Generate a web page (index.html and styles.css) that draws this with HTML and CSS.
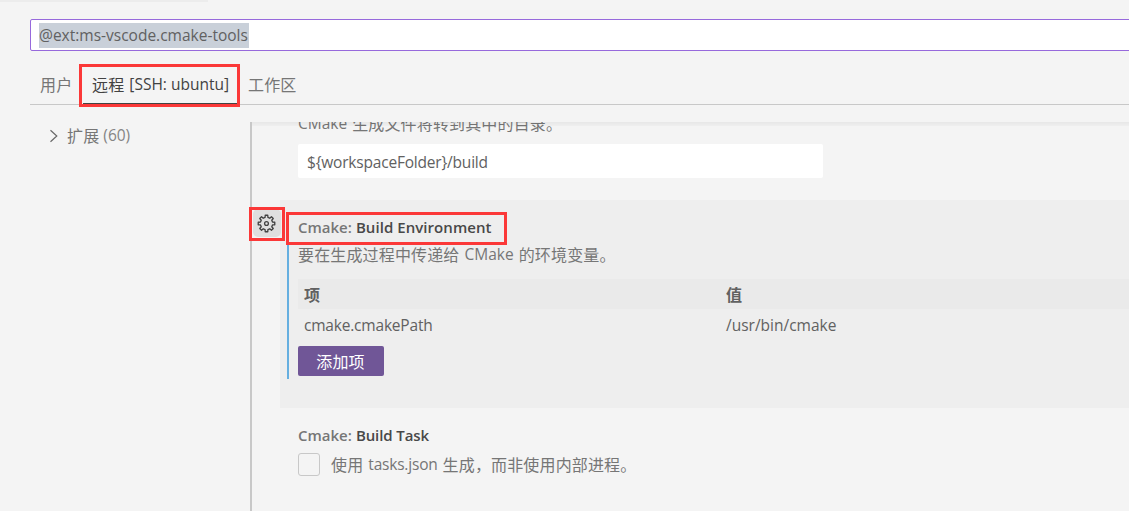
FILE: index.html
```html
<!DOCTYPE html>
<html lang="zh-CN">
<head>
<meta charset="utf-8">
<title>设置</title>
<link rel="stylesheet" href="styles.css">
</head>
<body>
<div class="editor-edge"></div>
<div class="search"><span class="selection"><span class="latin query">@ext:ms-vscode.cmake-tools</span></span></div>
<nav class="tabs">
  <div class="tab user">用户</div>
  <div class="tab active"><span>远程</span><span class="latin remote">[SSH: ubuntu]</span></div>
  <div class="tab workspace">工作区</div>
</nav>
<div class="main">
  <aside class="toc">
    <svg class="chevron" viewBox="0 0 10 14"><path d="M1.5 1.2 7.8 7 1.5 12.8"/></svg>
    <span>扩展</span><span class="latin count">(60)</span>
  </aside>
  <section class="settings">
    <div class="setting directory">
      <p class="description"><span class="latin cm">CMake</span><span>生成文件将转到其中的目录。</span></p>
      <div class="input"><span class="latin folder">${workspaceFolder}/build</span></div>
    </div>
    <div class="setting focused">
      <h3 class="title latin"><span class="category">Cmake:</span><span class="name env">Build Environment</span></h3>
      <p class="description"><span>要在生成过程中传递给</span><span class="latin cm">CMake</span><span>的环境变量。</span></p>
      <div class="table">
        <div class="row head"><span>项</span><span>值</span></div>
        <div class="row"><span class="latin key">cmake.cmakePath</span><span class="latin value">/usr/bin/cmake</span></div>
      </div>
      <button class="add">添加项</button>
      <div class="modified"></div>
      <div class="gear"><svg viewBox="0 0 20 20"><path d="M8.50 3.67 L8.67 1.30 L11.33 1.30 L11.50 3.67 L13.42 4.46 L15.21 2.90 L17.10 4.79 L15.54 6.58 L16.33 8.50 L18.70 8.67 L18.70 11.33 L16.33 11.50 L15.54 13.42 L17.10 15.21 L15.21 17.10 L13.42 15.54 L11.50 16.33 L11.33 18.70 L8.67 18.70 L8.50 16.33 L6.58 15.54 L4.79 17.10 L2.90 15.21 L4.46 13.42 L3.67 11.50 L1.30 11.33 L1.30 8.67 L3.67 8.50 L4.46 6.58 L2.90 4.79 L4.79 2.90 L6.58 4.46 Z"/><circle cx="10" cy="10" r="2"/></svg></div>
      <div class="mark mark-gear"></div>
      <div class="mark mark-title"></div>
    </div>
    <div class="setting task">
      <h3 class="title latin"><span class="category">Cmake:</span><span class="name tk">Build Task</span></h3>
      <div class="check"><span class="box"></span><span>使用</span><span class="latin json">tasks.json</span><span>生成，而非使用内部进程。</span></div>
    </div>
    <div class="scroll-shadow"></div>
  </section>
</div>
</body>
</html>
```
FILE: styles.css
```css
* { box-sizing: border-box; }
body {
  margin: 0;
  width: 1129px;
  height: 511px;
  overflow: hidden;
  background: #f4f4f4;
  color: #767676;
  font: 16px/24px "Noto Sans CJK SC", sans-serif;
  letter-spacing: .15px;
}
h3, p { margin: 0; }
span { white-space: nowrap; }
.latin { font-family: "Open Sans", sans-serif; font-size: 15.5px; letter-spacing: 0; }
.editor-edge { width: 208px; height: 2px; background: #ececec; }
.search {
  display: flex;
  align-items: center;
  height: 32px;
  margin: 17px -4px 0 30px;
  padding-left: 8px;
  border: 1px solid #9769dc;
  border-radius: 2px;
  background: #fff;
}
.selection {
  display: flex;
  align-items: center;
  width: 210px;
  height: 25px;
  background: #c9d0d9;
  color: #616161;
}
.tabs {
  display: flex;
  height: 54px;
  margin-left: 30px;
  padding-top: 13px;
  border-bottom: 1px solid #c8c8c8;
}
.tab { line-height: 40px; }
.user { width: 49px; padding-left: 10px; }
.active {
  display: flex;
  gap: 5px;
  width: 161px;
  height: 43px;
  padding-left: 10px;
  border: 3px solid #fb3838;
  color: #424242;
  line-height: 35px;
  background: linear-gradient(#424242, #424242) 1px 100% / 154px 1px no-repeat;
}
.workspace { padding-left: 8px; }
.main { display: flex; height: 389px; margin-top: 17px; }
.toc {
  display: flex;
  width: 250px;
  height: 28px;
  padding-left: 48px;
  line-height: 27px;
}
.chevron {
  width: 10px;
  height: 14px;
  margin: 7px 8px 0 1px;
  fill: none;
  stroke: #686868;
  stroke-width: 1.2;
}
.count { margin-left: 4px; color: #858585; }
.settings {
  position: relative;
  flex: 1;
  min-width: 0;
  border-left: 2px solid #c8c8c8;
}
.setting { margin-left: 28px; padding-left: 18px; }
.directory { height: 78px; overflow: hidden; }
.directory .description { margin-top: -11px; }
.description { display: flex; gap: 5px; height: 24px; }
.input {
  display: flex;
  align-items: center;
  width: 525px;
  height: 34px;
  margin-top: 9px;
  padding: 1px 0 0 9px;
  border-radius: 2px;
  background: #fff;
  color: #616161;
}
.folder, .key, .json { letter-spacing: -.2px; }
.focused { position: relative; height: 208px; padding-top: 15px; background: #eee; }
.title { display: flex; gap: 4px; height: 24px; font-size: 15px; font-weight: 600; }
.name { color: #484848; }
.env { letter-spacing: .06px; }
.tk { letter-spacing: -.1px; }
.focused .description { margin-top: 3px; }
.table { margin-top: 13px; color: #616161; }
.row { display: grid; grid-template-columns: 422px 1fr; height: 30px; padding-left: 6px; line-height: 32px; }
.head { background: #eaeaea; font-weight: 700; line-height: 30px; }
.add {
  display: block;
  width: 86px;
  height: 30px;
  margin-top: 7px;
  padding: 0 1px 0 0;
  border: 0;
  border-radius: 2px;
  background: #705697;
  color: #fff;
  font: inherit;
  letter-spacing: .15px;
}
.modified { position: absolute; left: 7px; top: 42px; width: 2px; height: 137px; background: #66afe0; }
.gear {
  position: absolute;
  left: -27px;
  top: 9px;
  display: grid;
  place-items: center;
  width: 28px;
  height: 28px;
  border-radius: 5px;
  background: #dfdfdf;
}
.gear svg { width: 19px; height: 19px; margin-right: 1px; fill: none; stroke: #424242; stroke-width: 1.4; stroke-linejoin: round; }
.mark { position: absolute; border: 3px solid #fb3838; }
.mark-gear { left: -31px; top: 7px; width: 36px; height: 34px; }
.mark-title { left: 6px; top: 12px; width: 221px; height: 33px; }
.task { padding-top: 15px; }
.check { display: flex; gap: 5px; height: 24px; margin-top: 5px; }
.box { width: 22px; height: 23px; margin: 1px 6px 0 0; border: 1px solid #c8c8c8; border-radius: 3px; }
.scroll-shadow { position: absolute; inset: 0 0 auto 0; height: 4px; background: linear-gradient(rgba(0, 0, 0, .055), rgba(0, 0, 0, .02)); }
```
